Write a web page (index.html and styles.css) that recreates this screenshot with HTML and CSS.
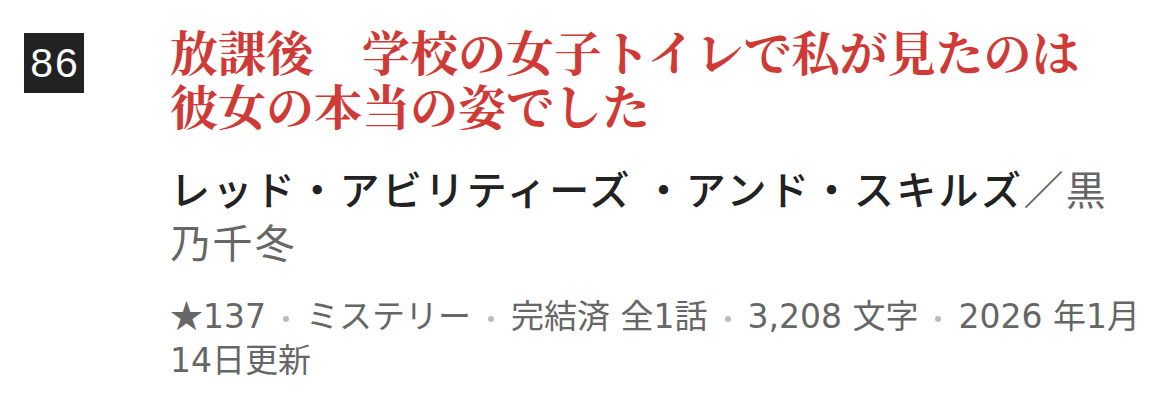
FILE: index.html
```html
<!DOCTYPE html>
<html lang="ja">
<head>
<meta charset="utf-8">
<link rel="stylesheet" href="styles.css">
</head>
<body>
<div class="item">
  <div class="rank">86</div>
  <div class="content">
    <h2 class="title">放課後　学校の女子トイレで私が見たのは<br>彼女の本当の姿でした</h2>
    <p class="author"><span class="name">レッド・アビリティーズ ・アンド・スキルズ</span><span class="sub">／黒<br>乃千冬</span></p>
    <p class="meta"><span class="star">★</span>137<span class="sep"></span>ミステリー<span class="sep"></span>完結済 全1話<span class="sep"></span>3,208 文字<span class="sep"></span>2026 年1月<br>14日更新</p>
  </div>
</div>
</body>
</html>
```

FILE: styles.css
```css
html, body {
  margin: 0;
  padding: 0;
  background: #ffffff;
}
.item {
  display: flex;
  align-items: flex-start;
  padding: 24px 0 0 24px;
  gap: 86px;
}
.rank {
  flex: none;
  width: 60px;
  height: 60px;
  margin-top: 9px;
  background: #222222;
  color: #ffffff;
  font-family: "Liberation Sans", Arial, sans-serif;
  font-size: 41px;
  line-height: 60px;
  text-align: center;
  letter-spacing: 2px;
  text-indent: 2px;
}
.content {
  flex: 1;
  min-width: 0;
  white-space: nowrap;
}
.title {
  margin: 0;
  font-family: "Noto Serif CJK JP", "Noto Sans CJK JP", serif;
  font-weight: 700;
  font-size: 48px;
  line-height: 54px;
  color: #d03a36;
}
.author {
  margin: 30px 0 0;
  font-family: "Noto Sans CJK JP", sans-serif;
  font-size: 40px;
  line-height: 53px;
  letter-spacing: 2.4px;
}
.author .name {
  color: #222222;
  font-weight: 500;
}
.author .sub {
  color: #666666;
}
.meta {
  margin: 24px 0 0;
  font-family: "DejaVu Sans", "Noto Sans CJK JP", sans-serif;
  font-size: 33px;
  line-height: 44px;
  color: #666666;
}
.meta .star {
  font-family: "Noto Sans CJK JP", sans-serif;
}
.sep {
  display: inline-block;
  width: 6px;
  height: 6px;
  border-radius: 50%;
  background: #bbbbbb;
  vertical-align: middle;
  margin: 0 17px;
}
```
